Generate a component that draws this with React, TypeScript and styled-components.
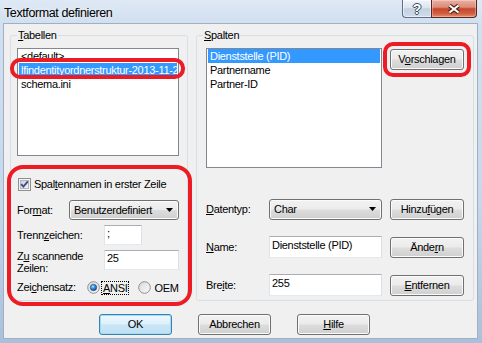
import React from "react";
import styled, { createGlobalStyle, css } from "styled-components";

const FONT = `"Liberation Sans", Arial, Helvetica, sans-serif`;

const GlobalStyle = createGlobalStyle`
  html, body { margin: 0; padding: 0; }
  body { width: 482px; height: 343px; overflow: hidden; background: #c6d7eb; }
  *, *::before, *::after { box-sizing: border-box; }
`;

const Window = styled.div`
  position: relative;
  width: 482px;
  height: 343px;
  display: flex;
  flex-direction: column;
  padding: 0 4px 4px 3px;
  background: linear-gradient(180deg, #dfe9f5 0px, #d2e0f0 20px, #c6d7ec 60%, #a9bfdb 100%);
  font-family: ${FONT};
  font-size: 11px;
  letter-spacing: -0.3px;
  color: #000;
  overflow: hidden;
`;

const TitleBar = styled.div`
  height: 23px;
  flex: none;
  display: flex;
  align-items: flex-start;
`;

const Title = styled.div`
  flex: 1;
  padding: 6px 0 0 1px;
  font-size: 12.5px;
  letter-spacing: -0.4px;
  line-height: 15px;
  text-shadow: 0 0 7px rgba(255, 255, 255, 0.9);
`;

const CaptionGroup = styled.div`
  display: flex;
  margin-right: 1px;
`;

const HelpButton = styled.div`
  width: 29px;
  height: 18px;
  border: 1px solid #5d6f86;
  border-top: none;
  border-right: none;
  border-bottom-left-radius: 4px;
  background: linear-gradient(180deg, #f1f5fa 0%, #dce5f0 45%, #c3d1e1 52%, #d1dcea 100%);
  box-shadow: inset 0 0 0 1px rgba(255, 255, 255, 0.5);
  display: flex;
  align-items: center;
  justify-content: center;
  color: #fff;
  font-weight: bold;
  font-size: 14px;
  letter-spacing: 0;
  line-height: 14px;
  text-shadow: 1px 0 0 #3a4a5e, -1px 0 0 #3a4a5e, 0 1px 0 #3a4a5e, 0 -1px 0 #3a4a5e;
`;

const CloseButton = styled.div`
  width: 46px;
  height: 18px;
  border: 1px solid #5a261c;
  border-top: none;
  border-bottom-right-radius: 4px;
  background: linear-gradient(180deg, #eab0a2 0%, #dc8c78 42%, #c7452c 52%, #d0603f 80%, #e08f74 100%);
  box-shadow: inset 0 0 0 1px rgba(255, 255, 255, 0.3);
  display: flex;
  align-items: center;
  justify-content: center;
`;

const Client = styled.div`
  flex: 1;
  display: flex;
  flex-direction: column;
  background: #f0f0f0;
  border: 1px solid #9fb0c4;
  padding: 5px 3px 0 6px;
`;

const GroupsRow = styled.div`
  display: flex;
  gap: 8px;
  height: 272px;
  flex: none;
`;

const Group = styled.fieldset<{ $w: number }>`
  margin: 0;
  padding: 0;
  width: ${(p) => p.$w}px;
  height: 272px;
  flex: none;
  border: 1px solid #d5dfe5;
  border-radius: 3px;
  min-inline-size: 0;
`;

const Legend = styled.legend`
  margin-left: 6px;
  padding: 0 1px;
  line-height: 13px;
`;

const Key = styled.span`
  text-decoration: underline;
`;

const GroupBody = styled.div<{ $pl: number; $pr: number }>`
  display: flex;
  flex-direction: column;
  padding: 0 ${(p) => p.$pr}px 0 ${(p) => p.$pl}px;
`;

const ListBox = styled.div<{ $w?: number; $h: number }>`
  width: ${(p) => (p.$w ? `${p.$w}px` : "auto")};
  height: ${(p) => p.$h}px;
  margin-top: 6px;
  flex: none;
  background: #fff;
  border: 1px solid #828790;
  padding: 0 1px;
  overflow: hidden;
`;

const ListItem = styled.div<{ $selected?: boolean }>`
  height: 14px;
  line-height: 14px;
  padding-left: 2px;
  white-space: nowrap;
  overflow: hidden;
  ${(p) =>
    p.$selected &&
    css`
      background: #3399ff;
      color: #fff;
    `}
`;

const CheckRow = styled.div`
  display: flex;
  align-items: center;
  gap: 3px;
  height: 13px;
  margin: 22px 0 0 1px;
  line-height: 13px;
`;

const FormRow = styled.div<{ $top: number; $h: number; $start?: boolean }>`
  display: flex;
  align-items: ${(p) => (p.$start ? "flex-start" : "center")};
  height: ${(p) => p.$h}px;
  margin-top: ${(p) => p.$top}px;
  flex: none;
`;

const Label = styled.div<{ $w?: number; $lh?: number }>`
  width: ${(p) => (p.$w ? `${p.$w}px` : "auto")};
  flex: none;
  line-height: ${(p) => p.$lh ?? 13}px;
  white-space: nowrap;
`;

const buttonFace = css`
  border: 1px solid #707070;
  border-radius: 3px;
  background: linear-gradient(180deg, #f2f2f2 0%, #ebebeb 48%, #dddddd 52%, #cfcfcf 100%);
  box-shadow: inset 0 0 0 1px #fbfbfb;
`;

const Combo = styled.div<{ $w: number; $h: number }>`
  ${buttonFace};
  width: ${(p) => p.$w}px;
  height: ${(p) => p.$h}px;
  flex: none;
  display: flex;
  align-items: center;
  justify-content: space-between;
  padding: 0 5px 0 4px;
  line-height: 13px;
  white-space: nowrap;
`;

const Edit = styled.div<{ $w?: number; $h: number; $pt: number }>`
  width: ${(p) => (p.$w ? `${p.$w}px` : "auto")};
  height: ${(p) => p.$h}px;
  flex: none;
  background: #fff;
  border: 1px solid;
  border-color: #abadb3 #dbdfe6 #e3e9ef #e2e3ea;
  padding: ${(p) => p.$pt}px 3px 0 2px;
  line-height: 13px;
  white-space: nowrap;
  overflow: hidden;
`;

const RadioOption = styled.div<{ $gap: number }>`
  display: flex;
  align-items: center;
  gap: 1px;
  margin-right: ${(p) => p.$gap}px;
`;

const RadioText = styled.span<{ $focus?: boolean }>`
  padding: 0 1px;
  margin-left: 1px;
  line-height: 12px;
  ${(p) =>
    p.$focus &&
    css`
      outline: 1px dotted #000;
    `}
`;

const PushButton = styled.button<{ $w: number; $default?: boolean }>`
  ${buttonFace};
  width: ${(p) => p.$w}px;
  height: 21px;
  flex: none;
  padding: 0;
  font: inherit;
  letter-spacing: inherit;
  color: #000;
  line-height: 13px;
  text-align: center;
  ${(p) =>
    p.$default &&
    css`
      border-color: #3c7fb1;
      background: linear-gradient(180deg, #eef8fd 0%, #ddf0fb 48%, #c9e6f6 52%, #bfe0f2 100%);
      box-shadow: inset 0 0 0 1px #9fdcf7;
    `}
`;

const TopRow = styled.div`
  display: flex;
  align-items: flex-start;
  gap: 8px;
`;

const SuggestButton = styled(PushButton)`
  margin-top: 7px;
`;

const FieldGrid = styled.div`
  display: grid;
  grid-template-columns: 63px 113px 82px;
  grid-auto-rows: 22px;
  row-gap: 16px;
  align-items: center;
  margin-top: 30px;
`;

const SideButton = styled(PushButton)`
  justify-self: end;
`;

const ButtonRow = styled.div`
  display: flex;
  gap: 26px;
  margin-top: 13px;
  padding-left: 89px;
`;

const Annotation = styled.div<{ $x: number; $y: number; $w: number; $h: number; $r: number }>`
  position: absolute;
  left: ${(p) => p.$x}px;
  top: ${(p) => p.$y}px;
  width: ${(p) => p.$w}px;
  height: ${(p) => p.$h}px;
  border: 4px solid #ed1c24;
  border-radius: ${(p) => p.$r}px;
  pointer-events: none;
`;

const CloseGlyph = () => (
  <svg width="14" height="10" viewBox="0 0 14 10">
    <path d="M2.5 1.5 L11.5 8.5 M11.5 1.5 L2.5 8.5" stroke="#4a1c14" strokeWidth="4.2" />
    <path d="M2.5 1.5 L11.5 8.5 M11.5 1.5 L2.5 8.5" stroke="#ffffff" strokeWidth="2.2" />
  </svg>
);

const Arrow = () => (
  <svg width="7" height="4" viewBox="0 0 7 4">
    <path d="M0 0 H7 L3.5 4 Z" fill="#000" />
  </svg>
);

const CheckBox = () => (
  <svg width="13" height="13" viewBox="0 0 13 13">
    <defs>
      <linearGradient id="cbInner" x1="0" y1="0" x2="1" y2="1">
        <stop offset="0" stopColor="#cbcfd5" />
        <stop offset="1" stopColor="#f6f6f6" />
      </linearGradient>
    </defs>
    <rect x="0.5" y="0.5" width="12" height="12" fill="#f4f4f4" stroke="#8e8f8f" />
    <rect x="2.5" y="2.5" width="8" height="8" fill="url(#cbInner)" stroke="#b3b8bf" />
    <path d="M3.2 6.2 L5.4 8.6 L9.9 3.3" stroke="#3f4f8e" strokeWidth="1.9" fill="none" />
  </svg>
);

const Radio = ({ id, checked }: { id: string; checked?: boolean }) => (
  <svg width="13" height="13" viewBox="0 0 13 13">
    <defs>
      <linearGradient id={`${id}-bg`} x1="0" y1="0" x2="1" y2="1">
        <stop offset="0" stopColor="#d5d8dc" />
        <stop offset="1" stopColor="#fbfbfb" />
      </linearGradient>
      <radialGradient id={`${id}-dot`} cx="0.4" cy="0.35" r="0.7">
        <stop offset="0" stopColor="#b6e6fb" />
        <stop offset="0.45" stopColor="#3a8fd6" />
        <stop offset="1" stopColor="#0d3f86" />
      </radialGradient>
    </defs>
    <circle cx="6.5" cy="6.5" r="5.8" fill={`url(#${id}-bg)`} stroke="#8e8f8f" />
    {checked && <circle cx="6.5" cy="6.5" r="3.2" fill={`url(#${id}-dot)`} stroke="#1b4a82" strokeWidth="0.6" />}
  </svg>
);

export default function App() {
  return (
    <>
      <GlobalStyle />
      <Window>
        <TitleBar>
          <Title>Textformat definieren</Title>
          <CaptionGroup>
            <HelpButton>?</HelpButton>
            <CloseButton>
              <CloseGlyph />
            </CloseButton>
          </CaptionGroup>
        </TitleBar>
        <Client>
          <GroupsRow>
            <Group $w={178}>
              <Legend>
                <Key>T</Key>abellen
              </Legend>
              <GroupBody $pl={6} $pr={8}>
                <ListBox $h={108}>
                  <ListItem>&lt;default&gt;</ListItem>
                  <ListItem $selected>lfindentityordnerstruktur-2013-11-20</ListItem>
                  <ListItem>schema.ini</ListItem>
                </ListBox>
                <CheckRow>
                  <CheckBox />
                  <span>
                    Spal<Key>t</Key>ennamen in erster Zeile
                  </span>
                </CheckRow>
                <FormRow $top={9} $h={20}>
                  <Label $w={52}>
                    For<Key>m</Key>at:
                  </Label>
                  <Combo $w={110} $h={20}>
                    Benutzerdefiniert
                    <Arrow />
                  </Combo>
                </FormRow>
                <FormRow $top={5} $h={20}>
                  <Label $w={87}>
                    Trenn<Key>z</Key>eichen:
                  </Label>
                  <Edit $w={38} $h={20} $pt={1}>
                    ;
                  </Edit>
                </FormRow>
                <FormRow $top={5} $h={24} $start>
                  <Label $w={87} $lh={12}>
                    Z<Key>u</Key> scannende
                    <br />
                    Zeilen:
                  </Label>
                  <Edit $w={75} $h={20} $pt={1}>
                    25
                  </Edit>
                </FormRow>
                <FormRow $top={7} $h={13}>
                  <Label $w={70}>
                    Zei<Key>c</Key>hensatz:
                  </Label>
                  <RadioOption $gap={10}>
                    <Radio id="ansi" checked />
                    <RadioText $focus>
                      <Key>A</Key>NSI
                    </RadioText>
                  </RadioOption>
                  <RadioOption $gap={0}>
                    <Radio id="oem" />
                    <RadioText>OEM</RadioText>
                  </RadioOption>
                </FormRow>
              </GroupBody>
            </Group>
            <Group $w={278}>
              <Legend>
                <Key>S</Key>palten
              </Legend>
              <GroupBody $pl={9} $pr={9}>
                <TopRow>
                  <ListBox $w={176} $h={120}>
                    <ListItem $selected>Dienststelle (PID)</ListItem>
                    <ListItem>Partnername</ListItem>
                    <ListItem>Partner-ID</ListItem>
                  </ListBox>
                  <SuggestButton $w={74}>
                    V<Key>o</Key>rschlagen
                  </SuggestButton>
                </TopRow>
                <FieldGrid>
                  <Label>
                    <Key>D</Key>atentyp:
                  </Label>
                  <Combo $w={113} $h={21}>
                    Char
                    <Arrow />
                  </Combo>
                  <SideButton $w={74}>
                    Hinzu<Key>f</Key>ügen
                  </SideButton>
                  <Label>
                    <Key>N</Key>ame:
                  </Label>
                  <Edit $w={113} $h={22} $pt={2}>
                    Dienststelle (PID)
                  </Edit>
                  <SideButton $w={74}>
                    Ände<Key>r</Key>n
                  </SideButton>
                  <Label>
                    Bre<Key>i</Key>te:
                  </Label>
                  <Edit $w={113} $h={22} $pt={2}>
                    255
                  </Edit>
                  <SideButton $w={74}>
                    <Key>E</Key>ntfernen
                  </SideButton>
                </FieldGrid>
              </GroupBody>
            </Group>
          </GroupsRow>
          <ButtonRow>
            <PushButton $w={73} $default>
              OK
            </PushButton>
            <PushButton $w={73}>Abbrechen</PushButton>
            <PushButton $w={73}>
              <Key>H</Key>ilfe
            </PushButton>
          </ButtonRow>
        </Client>
        <Annotation $x={10} $y={58} $w={175} $h={21} $r={10} />
        <Annotation $x={383} $y={42} $w={88} $h={35} $r={10} />
        <Annotation $x={7} $y={165} $w={185} $h={141} $r={16} />
      </Window>
    </>
  );
}
